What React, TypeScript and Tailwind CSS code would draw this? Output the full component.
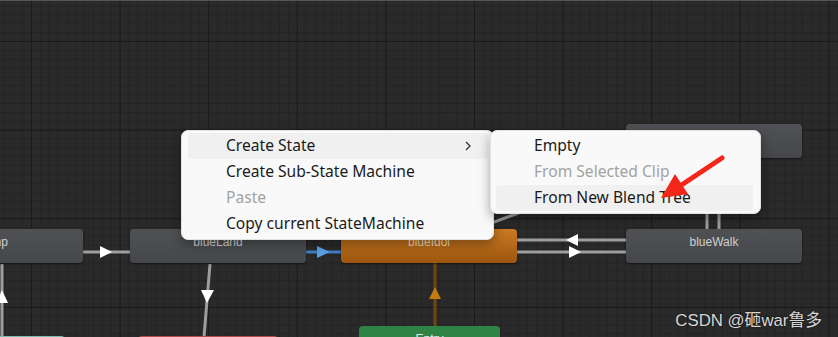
import React from "react";

const StateNode = ({
	label,
	className,
}: {
	label: string;
	className: string;
}) => (
	<div
		className={`absolute h-[34px] w-[176px] rounded-[4px] flex justify-center pt-[4px] text-[12px] font-['Liberation_Sans',sans-serif] shadow-[0_1px_2px_rgba(0,0,0,0.5)] ${className}`}
	>
		<span>{label}</span>
	</div>
);

const MenuItem = ({
	label,
	disabled,
	active,
	sub,
}: {
	label: string;
	disabled?: boolean;
	active?: boolean;
	sub?: boolean;
}) => (
	<div
		className={`h-[26px] flex items-center pl-[38px] pr-[14px] rounded-[4px] ${
			active ? "bg-[#f0f0f0]" : ""
		} ${disabled ? "text-[#a2a2a2]" : "text-[#1b1b1b]"}`}
	>
		<span className="flex-1">{label}</span>
		{sub && (
			<svg width="8" height="10" viewBox="0 0 8 10" className="mr-[2px]">
				<path d="M2 1 L6 5 L2 9" fill="none" stroke="#333" strokeWidth="1.3" />
			</svg>
		)}
	</div>
);

export default function App() {
	return (
		<div className="relative w-[838px] h-[337px] overflow-hidden bg-[#2a2a2a] border-t border-[#555]">
			<svg className="absolute inset-0" width="838" height="337">
				<defs>
					<pattern
						id="minor"
						x="31"
						y="40"
						width="8.86"
						height="8.86"
						patternUnits="userSpaceOnUse"
					>
						<path d="M0 0.5 H8.86 M0.5 0 V8.86" stroke="#242424" strokeWidth="1" />
					</pattern>
					<pattern
						id="major"
						x="31"
						y="40"
						width="88.6"
						height="88.6"
						patternUnits="userSpaceOnUse"
					>
						<path d="M0 0.5 H88.6 M0.5 0 V88.6" stroke="#1a1a1a" strokeWidth="1" />
					</pattern>
				</defs>
				<rect width="838" height="337" fill="url(#minor)" />
				<rect width="838" height="337" fill="url(#major)" />

				{/* transitions */}
				<g stroke="#9e9e9e" strokeWidth="3">
					<line x1="83" y1="251" x2="130" y2="251" />
					<line x1="2" y1="263" x2="2" y2="337" />
					<line x1="210" y1="263" x2="204" y2="336" />
					<line x1="517" y1="239" x2="626" y2="239" />
					<line x1="517" y1="251" x2="626" y2="251" />
					<line x1="429" y1="245" x2="714" y2="140" />
					<line x1="707" y1="157" x2="707" y2="229" />
					<line x1="719" y1="157" x2="719" y2="229" />
				</g>
				<line x1="305" y1="251" x2="341" y2="251" stroke="#3f7fc4" strokeWidth="3" />
				<line x1="435" y1="262" x2="435" y2="326" stroke="#6f4610" strokeWidth="3" />
				<g fill="#ffffff">
					<polygon points="100,245 112,251 100,257" />
					<polygon points="-4,302 2,289 8,302" />
					<polygon points="201,289 214,289 207,302" />
					<polygon points="578,233 566,239 578,245" />
					<polygon points="569,245 581,251 569,257" />
				</g>
				<polygon points="317,245 330,251 317,257" fill="#5aa0e6" />
				<polygon points="429,298 435,286 441,298" fill="#c27c12" />
			</svg>

			{/* state nodes */}
			<StateNode
				label="blueJump"
				className="left-[-93px] top-[228px] bg-gradient-to-b from-[#505154] to-[#46474a] text-[#d0d0d0] pr-[26px]"
			/>
			<StateNode
				label="blueLand"
				className="left-[130px] top-[228px] bg-gradient-to-b from-[#505154] to-[#46474a] text-[#d0d0d0]"
			/>
			<StateNode
				label="blueIdol"
				className="left-[341px] top-[228px] bg-gradient-to-b from-[#cc7a22] to-[#9c560e] text-[#f0d8b8]"
			/>
			<StateNode
				label="blueWalk"
				className="left-[626px] top-[228px] bg-gradient-to-b from-[#505154] to-[#46474a] text-[#d0d0d0]"
			/>
			<StateNode
				label="blueRun"
				className="left-[626px] top-[123px] bg-gradient-to-b from-[#505154] to-[#46474a] text-[#d0d0d0]"
			/>
			<div className="absolute left-[-40px] top-[335px] h-[34px] w-[105px] rounded-[4px] bg-[#7cbcae]" />
			<div className="absolute left-[138px] top-[335px] h-[34px] w-[140px] rounded-[4px] bg-[#b34c4c]" />
			<div className="absolute left-[359px] top-[325px] h-[34px] w-[141px] rounded-[4px] bg-[#2f8344] flex justify-center pt-[4px] text-[12px] text-[#e8f0e8] font-['Liberation_Sans',sans-serif]">
				Entry
			</div>

			{/* context menu */}
			<div className="absolute left-[181px] top-[129px] w-[313px] h-[110px] bg-[#f9f9f9] rounded-[7px] border border-[#e2e2e2] shadow-[0_4px_12px_rgba(0,0,0,0.35)] pt-[2px] pl-[6px] pr-[5px] text-[15.6px] font-['Noto_Sans',sans-serif]">
				<MenuItem label="Create State" active sub />
				<MenuItem label="Create Sub-State Machine" />
				<MenuItem label="Paste" disabled />
				<MenuItem label="Copy current StateMachine" />
			</div>
			<div className="absolute left-[490px] top-[129px] w-[271px] h-[84px] bg-[#f9f9f9] rounded-[7px] border border-[#e2e2e2] shadow-[0_4px_12px_rgba(0,0,0,0.35)] pt-[2px] pl-[5px] pr-[7px] text-[15.6px] font-['Noto_Sans',sans-serif]">
				<MenuItem label="Empty" />
				<MenuItem label="From Selected Clip" disabled />
				<MenuItem label="From New Blend Tree" active />
			</div>

			{/* annotation arrow */}
			<svg className="absolute inset-0 pointer-events-none" width="838" height="337">
				<line x1="722" y1="157" x2="680" y2="185" stroke="#f5261a" strokeWidth="5" strokeLinecap="round" />
				<polygon points="661,197 688,193 675,173" fill="#f5261a" />
			</svg>

			<div className="absolute right-[16px] top-[307px] text-[16.8px] text-[#d6d6d6] font-['Liberation_Sans','Noto_Sans_CJK_SC',sans-serif] [text-shadow:0_0_2px_rgba(0,0,0,0.6)]">
				CSDN @砸war鲁多
			</div>
		</div>
	);
}
